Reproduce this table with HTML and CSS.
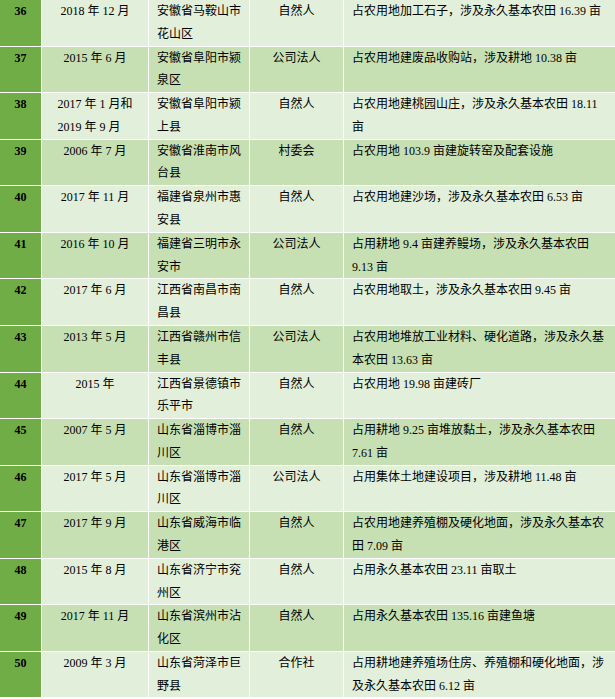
FILE: index.html
```html
<!DOCTYPE html>
<html lang="zh-CN">
<head>
<meta charset="utf-8">
<title>表格</title>
<link rel="stylesheet" href="styles.css">
</head>
<body>
<div class="table">
  <div class="row"><div class="c no">36</div><div class="c date">2018 年 12 月</div><div class="c loc">安徽省马鞍山市<br>花山区</div><div class="c type">自然人</div><div class="c desc">占农用地加工石子，涉及永久基本农田 16.39 亩</div></div>
  <div class="row"><div class="c no">37</div><div class="c date">2015 年 6 月</div><div class="c loc">安徽省阜阳市颍<br>泉区</div><div class="c type">公司法人</div><div class="c desc">占农用地建废品收购站，涉及耕地 10.38 亩</div></div>
  <div class="row"><div class="c no">38</div><div class="c date"><span class="multi">2017 年 1 月和<br>2019 年 9 月</span></div><div class="c loc">安徽省阜阳市颍<br>上县</div><div class="c type">自然人</div><div class="c desc">占农用地建桃园山庄，涉及永久基本农田 18.11<br>亩</div></div>
  <div class="row"><div class="c no">39</div><div class="c date">2006 年 7 月</div><div class="c loc">安徽省淮南市风<br>台县</div><div class="c type">村委会</div><div class="c desc">占农用地 103.9 亩建旋转窑及配套设施</div></div>
  <div class="row"><div class="c no">40</div><div class="c date">2017 年 11 月</div><div class="c loc">福建省泉州市惠<br>安县</div><div class="c type">自然人</div><div class="c desc">占农用地建沙场，涉及永久基本农田 6.53 亩</div></div>
  <div class="row"><div class="c no">41</div><div class="c date">2016 年 10 月</div><div class="c loc">福建省三明市永<br>安市</div><div class="c type">公司法人</div><div class="c desc">占用耕地 9.4 亩建养鳗场，涉及永久基本农田<br>9.13 亩</div></div>
  <div class="row"><div class="c no">42</div><div class="c date">2017 年 6 月</div><div class="c loc">江西省南昌市南<br>昌县</div><div class="c type">自然人</div><div class="c desc">占农用地取土，涉及永久基本农田 9.45 亩</div></div>
  <div class="row"><div class="c no">43</div><div class="c date">2013 年 5 月</div><div class="c loc">江西省赣州市信<br>丰县</div><div class="c type">公司法人</div><div class="c desc">占农用地堆放工业材料、硬化道路，涉及永久基<br>本农田 13.63 亩</div></div>
  <div class="row"><div class="c no">44</div><div class="c date">2015 年</div><div class="c loc">江西省景德镇市<br>乐平市</div><div class="c type">自然人</div><div class="c desc">占农用地 19.98 亩建砖厂</div></div>
  <div class="row"><div class="c no">45</div><div class="c date">2007 年 5 月</div><div class="c loc">山东省淄博市淄<br>川区</div><div class="c type">自然人</div><div class="c desc">占用耕地 9.25 亩堆放黏土，涉及永久基本农田<br>7.61 亩</div></div>
  <div class="row"><div class="c no">46</div><div class="c date">2017 年 5 月</div><div class="c loc">山东省淄博市淄<br>川区</div><div class="c type">公司法人</div><div class="c desc">占用集体土地建设项目，涉及耕地 11.48 亩</div></div>
  <div class="row"><div class="c no">47</div><div class="c date">2017 年 9 月</div><div class="c loc">山东省威海市临<br>港区</div><div class="c type">自然人</div><div class="c desc">占农用地建养殖棚及硬化地面，涉及永久基本农<br>田 7.09 亩</div></div>
  <div class="row"><div class="c no">48</div><div class="c date">2015 年 8 月</div><div class="c loc">山东省济宁市兖<br>州区</div><div class="c type">自然人</div><div class="c desc">占用永久基本农田 23.11 亩取土</div></div>
  <div class="row"><div class="c no">49</div><div class="c date">2017 年 11 月</div><div class="c loc">山东省滨州市沾<br>化区</div><div class="c type">自然人</div><div class="c desc">占用永久基本农田 135.16 亩建鱼塘</div></div>
  <div class="row"><div class="c no">50</div><div class="c date">2009 年 3 月</div><div class="c loc">山东省菏泽市巨<br>野县</div><div class="c type">合作社</div><div class="c desc">占用耕地建养殖场住房、养殖棚和硬化地面，涉<br>及永久基本农田 6.12 亩</div></div>
</div>
</body>
</html>
```
FILE: styles.css
```css
html, body {
  margin: 0;
  padding: 0;
  background: #ffffff;
}

.table {
  display: grid;
  grid-template-columns: 41px 106px 100px 93px 1fr;
  grid-auto-rows: 45.57px;
  gap: 1px;
  background: #ffffff;
  width: 615px;
  font-family: "Liberation Serif", "Noto Sans CJK SC", serif;
  font-size: 12px;
  line-height: 22.78px;
  color: #000000;
}

.row {
  display: contents;
}

.c {
  background: #e2efda;
  white-space: nowrap;
  overflow: hidden;
}

.row:nth-child(even) .c {
  background: #c6e0b4;
}

.row .c.no {
  background: #70ad47;
  font-weight: bold;
  text-align: center;
}

.date {
  text-align: center;
}

.multi {
  display: inline-block;
  text-align: left;
}

.loc {
  padding: 0 8px;
}

.type {
  text-align: center;
}

.desc {
  padding: 0 8px;
}
```
